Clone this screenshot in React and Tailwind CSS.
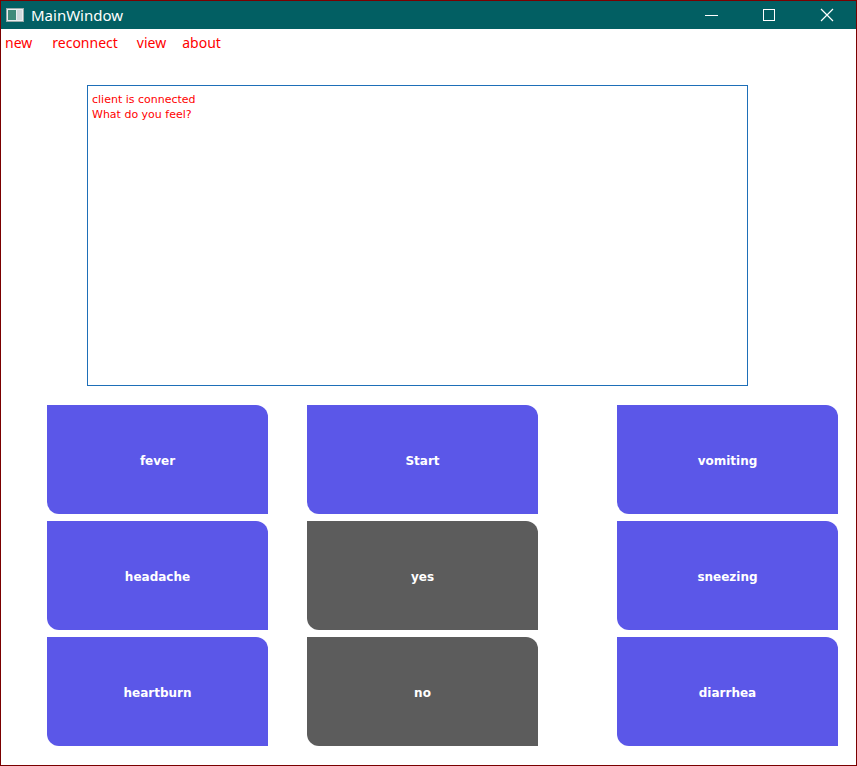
const symptoms = {
  left: ["fever", "headache", "heartburn"],
  middle: [
    { label: "Start", dark: false },
    { label: "yes", dark: true },
    { label: "no", dark: true },
  ],
  right: ["vomiting", "sneezing", "diarrhea"],
};

const btn =
  "h-[109px] pt-[2px] rounded-tr-[12px] rounded-bl-[12px] flex items-center justify-center text-white text-[12px] font-bold font-['DejaVu_Sans',sans-serif]";

const AppIcon = () => (
  <svg width="18" height="14" viewBox="0 0 18 14">
    <rect x="0.5" y="0.5" width="17" height="13" fill="#e8eef0" stroke="#9aa" />
    <rect x="2" y="2" width="8" height="10" fill="#3f8a7a" />
    <rect x="11" y="2" width="5" height="10" fill="#cfd8dc" />
  </svg>
);

const App = () => {
  return (
    <div className="w-[857px] h-[766px] border border-[#7a0000] bg-white flex flex-col overflow-hidden font-['Liberation_Sans',sans-serif]">
      {/* title bar */}
      <div className="h-[28px] bg-[#025f63] flex items-center text-white shrink-0">
        <div className="pl-[5px] pr-[7px] flex items-center">
          <AppIcon />
        </div>
        <span className="text-[15px] font-['Noto_Sans',sans-serif]">MainWindow</span>
        <div className="ml-auto flex items-center h-full">
          <div className="w-[58px] flex justify-center">
            <div className="w-[13px] h-px bg-white" />
          </div>
          <div className="w-[58px] flex justify-center">
            <div className="w-[12px] h-[12px] border border-white" />
          </div>
          <div className="w-[58px] flex justify-center">
            <svg width="14" height="14" viewBox="0 0 14 14">
              <path d="M1 1 L13 13 M13 1 L1 13" stroke="white" strokeWidth="1.2" />
            </svg>
          </div>
        </div>
      </div>

      {/* menu */}
      <div className="flex items-center h-[26px] text-[#ff0000] text-[14px] font-['Noto_Sans',sans-serif] pl-[4px]">
        <span className="mr-[20px]">new</span>
        <span className="mr-[19px]">reconnect</span>
        <span className="mr-[16px]">view</span>
        <span>about</span>
      </div>

      {/* output box */}
      <div className="ml-[86px] mt-[30px] w-[661px] h-[301px] border border-[#1e6fb8] px-[4px] pt-[6px] text-[#ff0000] text-[11px] leading-[15px] font-['DejaVu_Sans',sans-serif]">
        <div>client is connected</div>
        <div>What do you feel?</div>
      </div>

      {/* buttons */}
      <div className="flex mt-[19px] ml-[46px]">
        <div className="w-[221px] flex flex-col gap-[7px]">
          {symptoms.left.map((s) => (
            <div key={s} className={btn + " bg-[#5b57e8]"}>
              {s}
            </div>
          ))}
        </div>
        <div className="w-[231px] ml-[39px] flex flex-col gap-[7px]">
          {symptoms.middle.map((s) => (
            <div key={s.label} className={btn + (s.dark ? " bg-[#5c5c5c]" : " bg-[#5b57e8]")}>
              {s.label}
            </div>
          ))}
        </div>
        <div className="w-[221px] ml-[79px] flex flex-col gap-[7px]">
          {symptoms.right.map((s) => (
            <div key={s} className={btn + " bg-[#5b57e8]"}>
              {s}
            </div>
          ))}
        </div>
      </div>
    </div>
  );
};

export default App;
